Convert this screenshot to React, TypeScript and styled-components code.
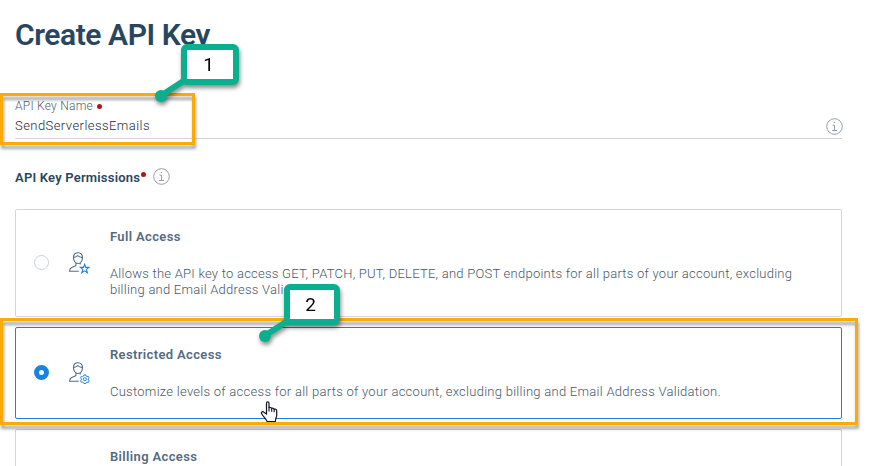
import React from "react";
import styled, { createGlobalStyle } from "styled-components";

const GlobalStyle = createGlobalStyle`
  *, *::before, *::after { box-sizing: border-box; }
  html, body { margin: 0; background: #fff; overflow: hidden; }
`;

const Page = styled.main`
  position: relative;
  width: 872px;
  height: 466px;
  overflow: hidden;
  padding: 15px 30px 0 15px;
  background: #fff;
  color: #546b81;
  font-family: Roboto, sans-serif;
  font-size: 13px;
`;

const Title = styled.h1`
  margin: 0;
  height: 40px;
  line-height: 40px;
  font-size: 30px;
  font-weight: 600;
  letter-spacing: -0.42px;
  color: #294661;
`;

const Field = styled.div`
  display: flex;
  align-items: flex-end;
  justify-content: space-between;
  height: 84px;
  padding-bottom: 2px;
  border-bottom: 1px solid #d2d6dc;
`;

const FieldText = styled.div`
  display: flex;
  flex-direction: column;
`;

const FieldInfo = styled.span`
  display: flex;
  margin: 0 -1px 1px 0;
`;

const FieldLabel = styled.label`
  display: flex;
  align-items: center;
  gap: 4px;
  height: 20px;
  font-size: 12px;
  font-weight: 300;
  letter-spacing: 0.25px;
  color: #51606f;
`;

const FieldValue = styled.span`
  height: 20px;
  line-height: 20px;
  font-size: 13px;
  letter-spacing: 0.44px;
  font-weight: 300;
  color: #202d3c;
`;

const RequiredDot = styled.i`
  width: 5px;
  height: 5px;
  border-radius: 50%;
  background: #b81214;
`;

const SectionHeading = styled.h2`
  display: flex;
  align-items: center;
  margin: 28px 0 23px;
  height: 19px;
  font-size: 13px;
  font-weight: 600;
  letter-spacing: 0.2px;
  color: #294661;

  ${RequiredDot} { margin: 0 7px 5px 1px; }
`;

const HeadingText = styled.span`
  padding-top: 2px;
`;

const Options = styled.div`
  display: flex;
  flex-direction: column;
  gap: 10px;
`;

const Card = styled.section<{ $height: number; $selected?: boolean }>`
  display: grid;
  grid-template-columns: 33px 61px 1fr;
  align-items: center;
  height: ${(p) => p.$height}px;
  padding-right: 40px;
  border: 1px solid ${(p) => (p.$selected ? "#1a82e2" : "#d2d6dc")};
  border-radius: 2px;
`;

const Radio = styled.span<{ $selected?: boolean }>`
  justify-self: end;
  margin-top: -2px;
  width: 15px;
  height: 15px;
  border-radius: 50%;
  border: ${(p) => (p.$selected ? "5px solid #1a82e2" : "1px solid #ccd1d7")};
  background: #fff;
`;

const IconSlot = styled.span`
  display: flex;
  margin: -1px 0 0 20px;
`;

const CardText = styled.div`
  align-self: start;
  padding-top: 17px;
`;

const CardTitle = styled.h3`
  margin: 0 0 19px;
  height: 20px;
  line-height: 20px;
  font-size: 13px;
  font-weight: 600;
  letter-spacing: 0.36px;
  color: #546b81;
`;

const CardDescription = styled.p<{ $spacing: number }>`
  margin: 0;
  line-height: 16px;
  white-space: pre;
  font-weight: 300;
  letter-spacing: ${(p) => p.$spacing}px;
  color: #465769;
`;

const Highlight = styled.div<{ $x: number; $y: number; $w: number; $h: number }>`
  position: absolute;
  left: ${(p) => p.$x}px;
  top: ${(p) => p.$y}px;
  width: ${(p) => p.$w}px;
  height: ${(p) => p.$h}px;
  border: 3px solid #faab08;
  filter: drop-shadow(1px 4px 1.5px rgba(0, 0, 0, 0.35));
`;

const Callout = styled.div<{ $x: number; $y: number }>`
  position: absolute;
  left: ${(p) => p.$x}px;
  top: ${(p) => p.$y}px;
  width: 86px;
  height: 60px;
  filter: drop-shadow(1px 3px 2px rgba(0, 0, 0, 0.45));
`;

const Pointer = styled.svg`
  position: absolute;
  inset: 0;
`;

const CalloutBox = styled.div<{ $left: number; $width: number }>`
  position: absolute;
  left: ${(p) => p.$left}px;
  top: 0;
  width: ${(p) => p.$width}px;
  height: 41px;
  padding-right: 3px;
  border: 6px solid #0aaf90;
  border-radius: 6px;
  background: #fff;
  color: #000;
  font: 19px/29px Roboto, sans-serif;
  text-align: center;
`;

const Cursor = styled.svg`
  position: absolute;
  left: 259px;
  top: 401px;
`;

const InfoIcon = () => (
  <svg width="17" height="17" viewBox="0 0 17 17" fill="none" stroke="#939dac" strokeWidth="1">
    <circle cx="8.5" cy="8.5" r="7.8" />
    <path d="M6.5 7.2h2v5.1M6 12.5h5" />
    <path d="M7.8 4.5h1.3" strokeWidth="1.2" />
  </svg>
);

const UserIcon = ({ badge }: { badge?: "star" | "gear" }) => (
  <svg width="21" height="22" viewBox="0 0 21 22" fill="none" strokeLinejoin="round">
    <g stroke="#546b81" strokeWidth="1.1">
      <path d="M9 .8c-2.900 0-4.500 2-4.500 4.800 0 3.100 1.800 5.900 4.500 5.900s4.500-2.800 4.500-5.900C13.500 2.800 11.900.8 9 .8Z" />
      <path d="M4.600 5.500C6 5.400 7.600 4.800 8.800 3.700c1.200 1.100 2.800 1.700 4.600 1.900" />
      <path d="M7 11v2.100c0 .5-.3.800-.8 1l-3.500 1.400C1.200 16.100.6 17.200.6 19.200h9.200M11.200 11v1.600" />
    </g>
    {badge === "star" && (
      <path
        stroke="#1a82e2"
        strokeWidth="1.1"
        strokeLinejoin="miter"
        d="m15.600 12.300 1.100 3.100h3.200l-2.500 2 1 3.200-2.800-1.800-2.800 1.800 1-3.200-2.500-2h3.200Z"
      />
    )}
    {badge === "gear" && (
      <g stroke="#1a82e2" strokeWidth="1">
        <path d="M14.900 12.900h1.900l.3 1.200 1 .5 1.200-.3.900 1.600-.9.900v1.100l.9.900-.9 1.600-1.200-.3-1 .5-.3.900h-1.900l-.3-.9-1-.5-1.200.3-.9-1.600.9-.9v-1.100l-.9-.9.900-1.600 1.200.3 1-.5Z" />
        <circle cx="15.850" cy="17.200" r="1.500" />
      </g>
    )}
  </svg>
);

const options = [
  {
    title: "Full Access",
    text: "Allows the API key to access GET, PATCH, PUT, DELETE, and POST endpoints for all parts of your account, excluding\nbilling and Email Address Validation.",
    height: 108,
    spacing: 0.245,
    badge: "star" as const,
  },
  {
    title: "Restricted Access",
    text: "Customize levels of access for all parts of your account, excluding billing and Email Address Validation.",
    height: 92,
    spacing: 0.27,
    badge: "gear" as const,
    selected: true,
  },
  { title: "Billing Access", text: "", height: 92, spacing: 0.27, badge: undefined },
];

const NumberedCallout = ({ x, y, label, left, width }: {
  x: number;
  y: number;
  label: string;
  left: number;
  width: number;
}) => (
  <Callout $x={x} $y={y}>
    <Pointer width="86" height="60">
      <path d="M6.500 52 34 34" stroke="#0aaf90" strokeWidth="6" />
      <circle cx="7" cy="52" r="6" fill="#0aaf90" />
    </Pointer>
    <CalloutBox $left={left} $width={width}>{label}</CalloutBox>
  </Callout>
);

export default function App() {
  return (
    <Page>
      <GlobalStyle />
      <Title>Create API Key</Title>
      <Field>
        <FieldText>
          <FieldLabel>API Key Name<RequiredDot /></FieldLabel>
          <FieldValue>SendServerlessEmails</FieldValue>
        </FieldText>
        <FieldInfo><InfoIcon /></FieldInfo>
      </Field>
      <SectionHeading><HeadingText>API Key Permissions</HeadingText><RequiredDot /><InfoIcon /></SectionHeading>
      <Options>
        {options.map((o) => (
          <Card key={o.title} $height={o.height} $selected={o.selected}>
            {o.text ? <Radio $selected={o.selected} /> : <span />}
            {o.badge ? <IconSlot><UserIcon badge={o.badge} /></IconSlot> : <span />}
            <CardText>
              <CardTitle>{o.title}</CardTitle>
              <CardDescription $spacing={o.spacing}>{o.text}</CardDescription>
            </CardText>
          </Card>
        ))}
      </Options>
      <Cursor width="20" height="21" viewBox="0 0 20 21">
        <path
          d="M7.500 13V2.300c0-2 2.500-2 2.500 0V7c.4-.8 2.400-.7 2.700.5.800-.7 2.300-.3 2.500.8 1-.6 2.500-.1 2.500 1.400v4.500c0 2-1.300 3-1.300 6.500H8.300C6.500 17 4.300 15.700 3 13.200c-1.600-1.800.3-3.200 1.900-1.900Z"
          fill="#fff" stroke="#111222" strokeWidth="1.200"
        />
        <path d="M10 6.500v4M12.700 7.500v3.200M15.200 8.300v3" stroke="#111222" strokeWidth="1.100" />
      </Cursor>
      <Highlight $x={0} $y={93} $w={195} $h={52} />
      <Highlight $x={0} $y={318} $w={858} $h={107} />
      <NumberedCallout x={154} y={44} label="1" left={27} width={58} />
      <NumberedCallout x={258} y={284} label="2" left={26} width={56} />
    </Page>
  );
}
